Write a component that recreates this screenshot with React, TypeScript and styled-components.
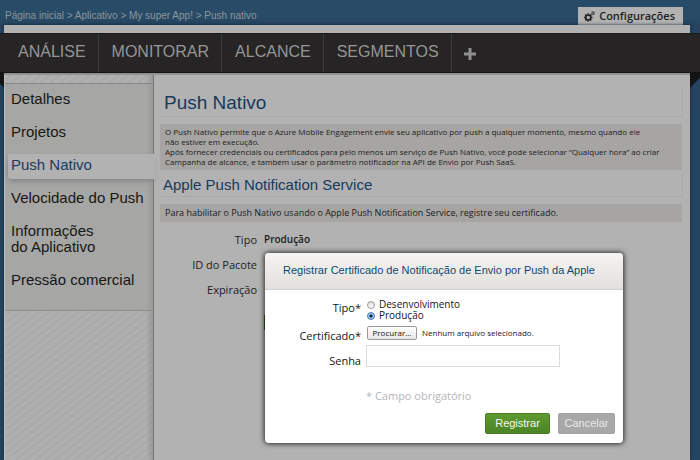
import React from "react";
import styled, { createGlobalStyle } from "styled-components";

const sans = `"Liberation Sans", Arial, sans-serif`;
const humanist = `"Open Sans", "Noto Sans", sans-serif`;

const GlobalStyle = createGlobalStyle`
  *, *::before, *::after { box-sizing: border-box; }
  body { margin: 0; background: #24445f; }
  h1, h2, h3, p, ul, dl, dd { margin: 0; padding: 0; font-weight: 400; }
  button, input { font: inherit; margin: 0; }
`;

const Page = styled.div`
  position: relative;
  display: flex;
  flex-direction: column;
  min-height: 100vh;
  overflow: hidden;
  background: linear-gradient(#284c68 0, #284c68 15px, #26445f 25px, #24445f 100%);
  font-family: ${humanist};
  color: #1c1c1c;
`;

const TopBar = styled.header`
  display: flex;
  justify-content: space-between;
  align-items: flex-end;
  height: 25px;
  padding: 0 17px 0 5px;
`;

const Breadcrumb = styled.nav`
  font: 10px/12px ${sans};
  color: #8d959a;
  padding-bottom: 3px;
  white-space: pre;

  a { color: inherit; text-decoration: none; }
`;

const SettingsTab = styled.a`
  display: flex;
  align-items: center;
  gap: 4px;
  height: 18px;
  padding: 0 8px 0 6px;
  background: #b2b2b2;
  color: #1e1e1e;
  font-size: 11px;
  font-weight: 600;
  line-height: 18px;
  text-decoration: none;
`;

const Shell = styled.div`
  display: flex;
  flex: 1;
  flex-direction: column;
  margin: 0 10px 0 4px;
  padding-top: 8px;
  background: #b2b2b2;
  box-shadow: 0 0 3px #12283c;
`;

const Ribbon = styled.nav`
  position: relative;
  display: flex;
  height: 40px;
  margin: 0 -10px 0 -4px;
  background: #262424;
  border-top: 1px solid #1b1a1a;
  border-bottom: 1px solid #141414;

  &::before,
  &::after {
    content: "";
    position: absolute;
    top: 39px;
    height: 15px;
    background: #141414;
  }
  &::before {
    left: 0;
    width: 4px;
    clip-path: polygon(0 0, 100% 0, 100% 100%, 0 70%);
  }
  &::after {
    right: 0;
    width: 10px;
    clip-path: polygon(0 0, 100% 0, 100% 30%, 0 100%);
  }
`;

const RibbonLink = styled.a<{ $first?: boolean }>`
  display: flex;
  align-items: center;
  padding: 0 12px 2px ${(p) => (p.$first ? 18 : 13)}px;
  border-right: 1px solid #3b3a3a;
  color: #969696;
  font: 16px/20px ${sans};
  text-decoration: none;
`;

const AddButton = styled.button`
  display: flex;
  align-items: center;
  padding: 2px 12px 0;
  border: 0;
  background: none;
  color: #8f8f8f;
`;

const Columns = styled.div`
  display: flex;
  flex: 1;
  border-top: 2px solid #919191;
`;

const Sidebar = styled.aside`
  flex: none;
  width: 150px;
  padding-top: 8px;
  border-left: 1px solid #bdbdbd;
  border-right: 1px solid #777;
  background:
    linear-gradient(90deg, transparent 141px, rgba(0, 0, 0, 0.12)),
    repeating-linear-gradient(142deg, #b0b0b0 0 2px, #a9a9a9 4px, #b0b0b0 6px);
`;

const Menu = styled.ul`
  display: flex;
  flex-direction: column;
  gap: 8px;
  padding: 4px 0 16px 3px;
  border-top: 1px solid #858585;
  border-bottom: 1px solid #8c8c8c;
  background: linear-gradient(90deg, #a6a7a4 141px, #999a97);
  list-style: none;
`;

const MenuItem = styled.li<{ $active?: boolean }>`
  margin-right: ${(p) => (p.$active ? -2 : 0)}px;
  border-radius: 3px 0 0 3px;
  background: ${(p) => (p.$active ? "#b2b2b2" : "none")};
  box-shadow: ${(p) => (p.$active ? "-1px 3px 6px -2px rgba(0, 0, 0, 0.3)" : "none")};

  a {
    display: block;
    padding: 3px 0 6px 3px;
    color: ${(p) => (p.$active ? "#163c62" : "#161616")};
    font: 15px/16px ${sans};
    text-decoration: none;
    white-space: pre-line;
  }
`;

const Content = styled.main`
  flex: 1;
  min-width: 0;
  padding: 11px 7px 0 6px;
`;

const Title = styled.h1`
  padding: 6px 4px;
  height: 31px;
  border: solid #a9a9a9;
  border-width: 0 1px 1px 0;
  color: #163a5e;
  font: 19px/22px ${sans};
`;

const Subtitle = styled.h2`
  height: 25px;
  margin-top: 2px;
  padding: 3px;
  border: solid #a9a9a9;
  border-width: 0 1px 1px 0;
  color: #163a5e;
  font: 15px/20px ${sans};
`;

const Note = styled.div<{ $small?: boolean }>`
  margin: 7px 1px 0 0;
  padding: ${(p) => (p.$small ? "3px 5px" : "0 5px")};
  background: #a6a5a3;
  color: #202020;
  font-size: ${(p) => (p.$small ? 8 : 9)}px;
  line-height: ${(p) => (p.$small ? 10 : 18)}px;
`;

const Details = styled.dl`
  display: grid;
  grid-template-columns: 97px 1fr;
  column-gap: 7px;
  padding-top: 5px;
  font-size: 11px;
  line-height: 25px;

  dt { text-align: right; }
  dd { font-size: 10px; font-weight: 600; }
`;

const GreenBar = styled.div`
  width: 60px;
  height: 15px;
  margin: 13px 0 0 104px;
  background: #34561c;
`;

const Dialog = styled.section`
  position: absolute;
  top: 253px;
  right: 77px;
  width: 358px;
  border-radius: 4px;
  background: #fff;
  box-shadow: 0 0 5px 1px rgba(0, 0, 0, 0.75);
  overflow: hidden;
`;

const DialogTitle = styled.h3`
  height: 37px;
  padding: 0 14px 0 18px;
  border-bottom: 1px solid #d2d1cd;
  background: linear-gradient(#f5f4f2, #e1e0dc);
  color: #14466f;
  font: 11px/34px ${sans};
  white-space: nowrap;
`;

const Form = styled.form`
  display: grid;
  grid-template-columns: 96px 1fr;
  column-gap: 5px;
  padding: 8px 8px 9px 0;
  font-size: 11px;
  color: #161616;
`;

const FieldLabel = styled.label<{ $tall?: boolean }>`
  padding-top: ${(p) => (p.$tall ? 10 : 2)}px;
  line-height: ${(p) => (p.$tall ? 14 : 16)}px;
  text-align: right;
`;

const RadioGroup = styled.div`
  display: flex;
  flex-direction: column;
  height: 28px;
  padding: 1px 0 0 1px;

  label {
    display: flex;
    align-items: center;
    gap: 4px;
    height: 11px;
    font-size: 10px;
    line-height: 11px;
  }
`;

const Radio = styled.input`
  appearance: none;
  width: 8px;
  height: 8px;
  border: 1px solid #999;
  border-radius: 50%;
  background: linear-gradient(#ddd, #fff);

  &:checked {
    border-color: #4777a8;
    background: radial-gradient(circle, #10243c 0 1px, #8fc0ec 2px, #b4dcfa 4px);
  }
`;

const FilePicker = styled.label`
  display: flex;
  align-items: center;
  gap: 5px;
  height: 14px;
  padding-left: 1px;
  font-size: 8px;
  line-height: 12px;
`;

const FileInput = styled.input`
  position: absolute;
  width: 1px;
  height: 1px;
  opacity: 0;
`;

const BrowseFace = styled.span`
  width: 50px;
  border: 1px solid #9a9a9a;
  border-radius: 2px;
  background: linear-gradient(#fff, #e6e6e6);
  text-align: center;
`;

const PasswordInput = styled.input`
  width: 194px;
  height: 22px;
  margin-top: 1px;
  padding: 0 4px;
  border: 1px solid #dcdcdc;
  background: #fff;
`;

const Required = styled.p`
  grid-column: 2;
  padding-top: 20px;
  color: #b5b5b8;
  line-height: 16px;
`;

const Actions = styled.div`
  display: flex;
  grid-column: 1 / -1;
  justify-content: flex-end;
  gap: 8px;
  padding-top: 9px;
`;

const ActionButton = styled.button<{ $primary?: boolean }>`
  width: ${(p) => (p.$primary ? 65 : 57)}px;
  height: 21px;
  padding: 0;
  border: 1px solid ${(p) => (p.$primary ? "#467c22" : "#a2a2a2")};
  border-radius: 2px;
  background: ${(p) => (p.$primary ? "linear-gradient(#5e9a30, #4b8425)" : "#a8a8a8")};
  color: ${(p) => (p.$primary ? "#f4f8ef" : "#e9e9e9")};
  font: 11px/19px ${sans};
`;

const teeth = [0, 45, 90, 135, 180, 225, 270, 315];

function Gear({ x, y, size }: { x: number; y: number; size: number }) {
  return (
    <g transform={`translate(${x} ${y}) scale(${size})`} fill="none" stroke="#1e1e1e">
      <circle r="2.7" strokeWidth="1.8" />
      {teeth.map((t) => (
        <path key={t} d="M0-3.2V-4.6" strokeWidth="1.6" transform={`rotate(${t})`} />
      ))}
    </g>
  );
}

function GearsIcon() {
  return (
    <svg width="11" height="11" viewBox="0 0 11 11" aria-hidden="true">
      <Gear x={4.3} y={6.5} size={0.92} />
      <Gear x={9} y={2.2} size={0.42} />
    </svg>
  );
}

const crumbs = ["Página inicial", "Aplicativo", "My super App!", "Push nativo"];
const sections = ["ANÁLISE", "MONITORAR", "ALCANCE", "SEGMENTOS"];
const menu = ["Detalhes", "Projetos", "Push Nativo", "Velocidade do Push", "Informações\ndo Aplicativo", "Pressão comercial"];

export default function App() {
  return (
    <Page>
      <GlobalStyle />
      <TopBar>
        <Breadcrumb>
          {crumbs.map((c, i) => (
            <React.Fragment key={c}>
              {i > 0 && " > "}
              <a href="#">{c}</a>
            </React.Fragment>
          ))}
        </Breadcrumb>
        <SettingsTab href="#">
          <GearsIcon />
          Configurações
        </SettingsTab>
      </TopBar>
      <Shell>
        <Ribbon>
          {sections.map((s, i) => (
            <RibbonLink key={s} href="#" $first={i === 0}>{s}</RibbonLink>
          ))}
          <AddButton type="button">
            <svg width="12" height="12" viewBox="0 0 12 12" aria-hidden="true">
              <path d="M6 0v12M0 6h12" stroke="currentColor" strokeWidth="3" />
            </svg>
          </AddButton>
        </Ribbon>
        <Columns>
          <Sidebar>
            <Menu>
              {menu.map((m) => (
                <MenuItem key={m} $active={m === "Push Nativo"}><a href="#">{m}</a></MenuItem>
              ))}
            </Menu>
          </Sidebar>
          <Content>
            <Title>Push Nativo</Title>
            <Note $small>
              <p>O Push Nativo permite que o Azure Mobile Engagement envie seu aplicativo por push a qualquer momento, mesmo quando ele<br />não estiver em execução.</p>
              <p>Após fornecer credenciais ou certificados para pelo menos um serviço de Push Nativo, você pode selecionar “Qualquer hora” ao criar<br />Campanha de alcance, e também usar o parâmetro notificador na API de Envio por Push SaaS.</p>
            </Note>
            <Subtitle>Apple Push Notification Service</Subtitle>
            <Note>Para habilitar o Push Nativo usando o Apple Push Notification Service, registre seu certificado.</Note>
            <Details>
              <dt>Tipo</dt><dd>Produção</dd>
              <dt>ID do Pacote</dt><dd />
              <dt>Expiração</dt><dd />
            </Details>
            <GreenBar />
          </Content>
        </Columns>
      </Shell>
      <Dialog role="dialog" aria-labelledby="dialog-title">
        <DialogTitle id="dialog-title">Registrar Certificado de Notificação de Envio por Push da Apple</DialogTitle>
        <Form>
          <FieldLabel as="span" id="type-label">Tipo*</FieldLabel>
          <RadioGroup role="radiogroup" aria-labelledby="type-label">
            <label><Radio type="radio" name="type" />Desenvolvimento</label>
            <label><Radio type="radio" name="type" defaultChecked />Produção</label>
          </RadioGroup>
          <FieldLabel htmlFor="certificate">Certificado*</FieldLabel>
          <FilePicker>
            <FileInput id="certificate" type="file" />
            <BrowseFace>Procurar...</BrowseFace>
            Nenhum arquivo selecionado.
          </FilePicker>
          <FieldLabel htmlFor="password" $tall>Senha</FieldLabel>
          <PasswordInput id="password" type="password" />
          <Required>* Campo obrigatório</Required>
          <Actions>
            <ActionButton type="button" $primary>Registrar</ActionButton>
            <ActionButton type="button">Cancelar</ActionButton>
          </Actions>
        </Form>
      </Dialog>
    </Page>
  );
}
